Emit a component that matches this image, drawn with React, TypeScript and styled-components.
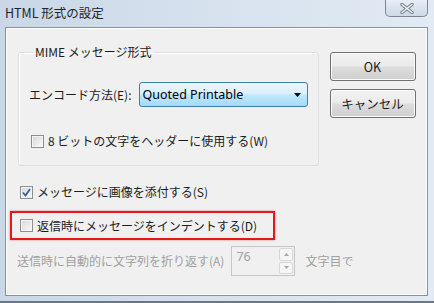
import React from 'react';
import styled, { createGlobalStyle } from 'styled-components';

const GlobalStyle = createGlobalStyle`
  html, body {
    margin: 0;
    padding: 0;
    background: #ffffff;
  }
  body {
    font-family: "Noto Sans CJK JP", "Noto Sans", sans-serif;
    font-size: 12px;
    color: #1b1b1b;
  }
`;

const Frame = styled.div`
  width: 434px;
  height: 303px;
  box-sizing: border-box;
  display: flex;
  flex-direction: column;
  background: linear-gradient(90deg, #c9d7e6 0%, #d8e3ef 55%, #e2eaf3 100%);
  border-bottom: 2px solid #6b7784;
  overflow: hidden;
`;

const TitleBar = styled.div`
  height: 27px;
  display: flex;
  align-items: flex-start;
  justify-content: space-between;
  padding-left: 5px;
  padding-right: 6px;
`;

const Title = styled.div`
  margin-top: 5px;
  font-size: 12.5px;
  line-height: 16px;
  color: #1e2530;
`;

const CloseButton = styled.div`
  width: 43px;
  height: 17px;
  box-sizing: border-box;
  border: 1px solid #7d8894;
  border-top: none;
  border-radius: 0 0 5px 5px;
  background: linear-gradient(180deg, #e9eff5 0%, #d7e1ec 60%, #cdd8e4 100%);
  display: flex;
  align-items: center;
  justify-content: center;
`;

const Client = styled.div`
  flex: 1;
  margin: 0 6px 5px 5px;
  box-sizing: border-box;
  border: 1px solid #8593a1;
  background: #f0f0f0;
  box-shadow: inset 0 0 0 1px #ffffff;
  display: flex;
  flex-direction: column;
`;

const TopRow = styled.div`
  display: flex;
  align-items: flex-start;
  padding: 16px 0 0 12px;
`;

const Group = styled.fieldset`
  width: 299px;
  height: 122px;
  box-sizing: border-box;
  margin: 0;
  padding: 0 10px;
  border: 1px solid #d9e1e6;
  border-radius: 3px;
  box-shadow: inset 1px 1px 0 #ffffff;
  display: flex;
  flex-direction: column;
`;

const Legend = styled.legend`
  padding: 0 2px;
  margin-left: 4px;
  font-size: 12px;
  line-height: 16px;
  color: #1b1b1b;
`;

const EncodeRow = styled.div`
  display: flex;
  align-items: center;
  gap: 7px;
  margin-top: 22px;
`;

const Label = styled.span`
  font-size: 12px;
  line-height: 16px;
  white-space: nowrap;
`;

const Combo = styled.div`
  width: 169px;
  height: 25px;
  box-sizing: border-box;
  border: 1px solid #3c7fb1;
  border-radius: 3px;
  background: linear-gradient(180deg, #eaf6fd 0%, #d9f0fc 45%, #bee6fd 55%, #a7d9f5 100%);
  display: flex;
  align-items: center;
  justify-content: space-between;
  padding: 0 6px 0 3px;
  font-family: "Noto Sans", sans-serif;
  font-size: 12.5px;
  color: #000;
`;

const CheckRow = styled.div<{ $indent?: number; $top?: number }>`
  display: flex;
  align-items: center;
  gap: 4px;
  margin-left: ${({ $indent }) => $indent ?? 0}px;
  margin-top: ${({ $top }) => $top ?? 0}px;
  height: 16px;
`;

const Box = styled.span`
  width: 11px;
  height: 11px;
  border: 1px solid #8e8f8f;
  background: linear-gradient(135deg, #d6d6d6 0%, #eeeeee 65%, #fbfbfb 100%);
  box-shadow: inset 0 0 0 1px #f4f4f4;
  display: flex;
  align-items: center;
  justify-content: center;
  flex-shrink: 0;
`;

const Buttons = styled.div`
  display: flex;
  flex-direction: column;
  gap: 8px;
  margin: 8px 0 0 11px;
`;

const Button = styled.div`
  width: 86px;
  height: 29px;
  box-sizing: border-box;
  border: 1px solid #707070;
  border-radius: 3px;
  background: linear-gradient(180deg, #f2f2f2 0%, #ebebeb 48%, #dddddd 52%, #cfcfcf 100%);
  box-shadow: inset 0 0 0 1px #fafafa;
  display: flex;
  align-items: center;
  justify-content: center;
  font-size: 12.5px;
  color: #1b1b1b;
`;

const Lower = styled.div`
  display: flex;
  flex-direction: column;
  padding-left: 4px;
`;

const Highlight = styled.div`
  width: 265px;
  height: 29px;
  box-sizing: border-box;
  margin-top: 11px;
  border: 2px solid #e01a1a;
  box-shadow: 0 0 2px rgba(200, 0, 0, 0.5);
  display: flex;
  align-items: center;
  padding-left: 8px;
`;

const WrapRow = styled.div`
  display: flex;
  align-items: center;
  margin: 6px 0 0 7px;
  color: #a0a0a0;
`;

const Spin = styled.div`
  width: 64px;
  height: 30px;
  box-sizing: border-box;
  margin: 0 10px 0 7px;
  border: 1px solid #c6c6c6;
  background: #f0f0f0;
  display: flex;
  justify-content: space-between;
  padding: 1px 1px 1px 4px;
  font-family: "Noto Sans", sans-serif;
  font-size: 12.5px;
  line-height: 17px;
  color: #a3a3a3;
`;

const SpinButtons = styled.div`
  width: 14px;
  display: flex;
  flex-direction: column;
  gap: 1px;
`;

const SpinButton = styled.div`
  flex: 1;
  border: 1px solid #d8d8d8;
  border-radius: 2px;
  background: #f6f6f6;
  display: flex;
  align-items: center;
  justify-content: center;
`;

const CloseGlyph = () => (
  <svg width="14" height="11" viewBox="0 0 14 11">
    <path d="M2 1.5 L12 9.5 M12 1.5 L2 9.5" stroke="#6f7a86" strokeWidth="3.4" strokeLinecap="round" />
    <path d="M2 1.5 L12 9.5 M12 1.5 L2 9.5" stroke="#f3f6f9" strokeWidth="1.6" strokeLinecap="round" />
  </svg>
);

const Check = () => (
  <svg width="9" height="9" viewBox="0 0 9 9">
    <path d="M1 4.5 L3.5 7.5 L8 1" fill="none" stroke="#3a5d9c" strokeWidth="1.8" />
  </svg>
);

const Arrow = ({ up }: { up?: boolean }) => (
  <svg width="5" height="3" viewBox="0 0 5 3">
    <path d={up ? 'M0 3 L2.5 0 L5 3 Z' : 'M0 0 L2.5 3 L5 0 Z'} fill="#a8a8a8" />
  </svg>
);

const App = () => (
  <>
    <GlobalStyle />
    <Frame>
      <TitleBar>
        <Title>HTML 形式の設定</Title>
        <CloseButton>
          <CloseGlyph />
        </CloseButton>
      </TitleBar>
      <Client>
        <TopRow>
          <Group>
            <Legend>MIME メッセージ形式</Legend>
            <EncodeRow>
              <Label>エンコード方法(E):</Label>
              <Combo>
                <span>Quoted Printable</span>
                <svg width="7" height="4" viewBox="0 0 7 4">
                  <path d="M0 0 L7 0 L3.5 4 Z" fill="#000" />
                </svg>
              </Combo>
            </EncodeRow>
            <CheckRow $indent={2} $top={26}>
              <Box />
              <Label>8 ビットの文字をヘッダーに使用する(W)</Label>
            </CheckRow>
          </Group>
          <Buttons>
            <Button>OK</Button>
            <Button>キャンセル</Button>
          </Buttons>
        </TopRow>
        <Lower>
          <CheckRow $indent={10} $top={18}>
            <Box>
              <Check />
            </Box>
            <Label>メッセージに画像を添付する(S)</Label>
          </CheckRow>
          <Highlight>
            <CheckRow>
              <Box />
              <Label>返信時にメッセージをインデントする(D)</Label>
            </CheckRow>
          </Highlight>
          <WrapRow>
            <Label>送信時に自動的に文字列を折り返す(A)</Label>
            <Spin>
              <span>76</span>
              <SpinButtons>
                <SpinButton>
                  <Arrow up />
                </SpinButton>
                <SpinButton>
                  <Arrow />
                </SpinButton>
              </SpinButtons>
            </Spin>
            <Label>文字目で</Label>
          </WrapRow>
        </Lower>
      </Client>
    </Frame>
  </>
);

export default App;
